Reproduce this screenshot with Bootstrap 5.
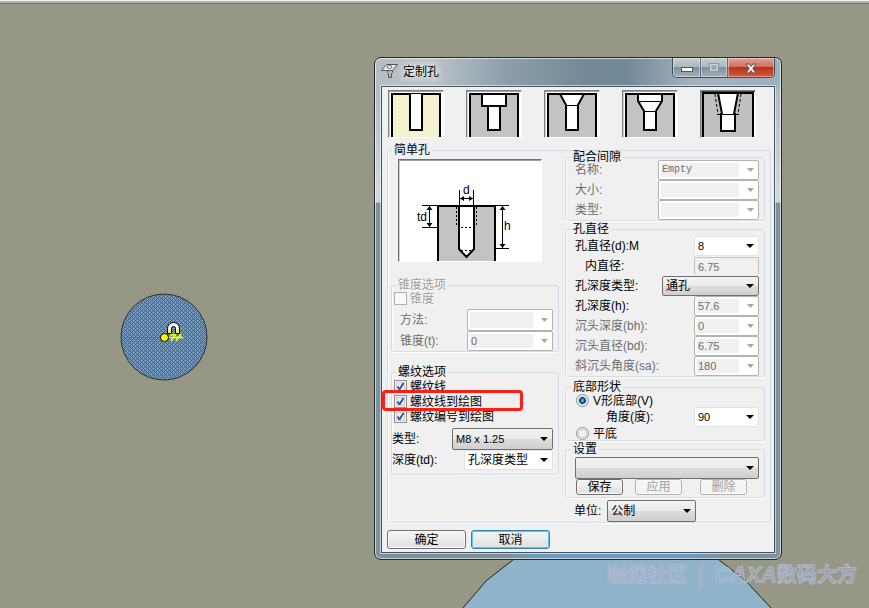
<!DOCTYPE html>
<html lang="zh-CN">
<head>
<meta charset="utf-8">
<meta name="viewport" content="width=device-width, initial-scale=1">
<title>定制孔</title>
<link href="https://cdn.jsdelivr.net/npm/bootstrap@5.3.0/dist/css/bootstrap.min.css" rel="stylesheet">
<style>
  body { background: #979785; font: 12px/14px "Liberation Sans", "Noto Sans CJK SC", sans-serif; color: #000; }
  .desk { min-height: 100vh; border-top: 1px solid #f0f0f0; box-shadow: inset 0 2px 0 #b4b4aa, inset 0 3px 0 #77776a; }
  .shape-small { left: 120px; top: 292px; }
  .shape-big { left: 462px; bottom: 0; }
  .wmark { left: 607px; top: 562px; font-size: 20px; line-height: 24px; font-weight: 700; color: rgba(160,178,205,.35); -webkit-text-stroke: 1px #b2b9d4; gap: 11px; }
  .wmark em { font-size: 22px; }

  .win { left: 374px; top: 56px; width: 408px; border: 1px solid #23282c; border-radius: 7px; padding: 0 6px 6px;
    background:
      linear-gradient(90deg, transparent 33%, #6f9bc0 40%, #6f9bc0 78%, transparent 86%) bottom/100% 7px no-repeat,
      linear-gradient(90deg, #b3bdc4 0, #bac4ca 14%, #8d9fab 32%, #748997 52%, #72899a 62%, #a3b2bd 78%, #9db0be 100%) top/100% 29px no-repeat,
      linear-gradient(180deg, #a4b3bd 0, #d3dbe0 144px, #7b929f 145px, #7b929f 100%);
    box-shadow: inset 0 0 0 1px rgba(255,255,255,.6); }
  .bar { height: 28px; }
  .bar h1 { font-size: 12px; line-height: 16px; padding-left: 5px; margin-top: 6px; text-shadow: 0 0 6px #fff, 0 0 8px #fff; }
  .caps { height: 20px; border: 1px solid #3f4d58; border-top: 0; border-radius: 0 0 5px 5px; overflow: hidden; }
  .caps button { border: 0; padding: 0; background: linear-gradient(#c5ced6 0, #aab7c1 48%, #7f909d 50%, #a2b2be 100%); box-shadow: inset 0 0 0 1px rgba(255,255,255,.4); }
  .caps button + button { border-left: 1px solid #5c6a75; }
  .cap-s { width: 27px; }
  .caps .cap-x { width: 47px; background: linear-gradient(#e2a397 0, #d0705f 45%, #bb3217 50%, #cf5c3c 100%); }

  .client { background: #f0f0f0; border: 1px solid #46545f; padding: 3px 3px 3px 5px; box-shadow: 0 0 0 1px rgba(255,255,255,.55); }
  .thumbs { gap: 22px; padding-left: 1px; }
  .thumb { width: 56px; height: 48px; padding: 0; border: 1px solid; border-color: #808080 #fff #fff #808080; background: #fff; }
  .thumb svg, .preview svg { display: block; }

  fieldset.grp { border: 1px solid #d3dde6; border-radius: 3px; box-shadow: inset 1px 0 0 #fff, 0 1px 0 #fff; }
  .grp > legend { float: none; width: auto; font-size: 12px; line-height: 14px; margin: 0 0 0 4px; padding: 0 2px; }
  .colR .grp > legend { margin-left: 5px; }
  .outer { margin-top: 5px; }
  .colL { padding: 2px 6px 0 3px; }
  .colR { width: 200px; margin: -7px 5px 0 0; flex: none; }
  .preview { width: 144px; height: 103px; margin-left: 7px; border: 1px solid; border-color: #707070 #fff #fff #707070; background: #fff; }
  .g-taper { margin-top: 16px; }
  .g-thread { margin-top: 13px; }
  .g-dia { margin-top: 1px; }
  .g-bot { margin-top: 3px; }
  .g-set { margin-top: 1px; }
  .rowsL { padding-right: 5px; }
  .rowsR { padding: 0 5px 0 9px; }
  .up { margin-top: -4px; }
  .r20 { height: 20px; }
  .r22 { height: 22px; }
  .r15 { height: 15px; }
  .r13 { height: 13px; }
  .pre8 { padding-left: 8px; }
  .in10 { padding-left: 10px; }
  .in31 { padding-left: 31px; }
  .dim, .dim label { color: #6d6d6d; }
  .off label, .off > legend.off { color: #9c9c9c; text-shadow: 1px 1px 0 #fff; }
  .off .dim label { color: #6d6d6d; text-shadow: none; }

  .form-select { width: auto; flex: none; height: 100%; min-height: 0; margin: 0; padding: 0 18px 0 3px; font-size: 12px; line-height: 16px; color: #000; border-radius: 2px; border: 1px solid #e2e3ea; background: #fff url("data:image/svg+xml,%3Csvg xmlns='http://www.w3.org/2000/svg' width='8' height='4'%3E%3Cpath d='M0 0h8L4 4z'/%3E%3C/svg%3E") right 4px center/8px 4px no-repeat; }
  .form-select.btnlike { border-color: #707070; background-image: url("data:image/svg+xml,%3Csvg xmlns='http://www.w3.org/2000/svg' width='8' height='4'%3E%3Cpath d='M0 0h8L4 4z'/%3E%3C/svg%3E"), linear-gradient(#f2f2f2, #ebebeb 49%, #dddddd 50%, #cfcfcf); background-size: 8px 4px, 100% 100%; background-position: right 4px center, 0 0; }
  .form-select:disabled { color: #6d6d6d; border-color: #b2b2b2; background-color: #fff; background-image: url("data:image/svg+xml,%3Csvg xmlns='http://www.w3.org/2000/svg' width='7' height='4'%3E%3Cpath d='M0 0h7L3.500 4z' fill='%23a8a8a8'/%3E%3C/svg%3E"), linear-gradient(#f0f0f0, #f0f0f0); background-size: 7px 4px, calc(100% - 21px) calc(100% - 4px); background-position: right 4px center, 2px 2px; }
  .num { font-size: 11px !important; }
  .mono { font-family: "Liberation Mono", monospace; font-size: 10px !important; }
  .w65 { width: 65px !important; } .w86 { width: 86px !important; } .w89 { width: 89px !important; }
  .w97 { width: 97px !important; } .w101 { width: 101px !important; }
  .ro { height: 18px; min-height: 0; padding: 0 0 0 3px; border: 1px solid #c4c4c4; border-bottom: 0; border-radius: 2px; color: #6d6d6d; background: #f0f0f0 !important; }

  .form-check-input { flex: none; margin: 0; width: 13px; height: 13px; border: 1px solid #8e8f8f; background-color: #f4f4f4; box-shadow: inset 0 0 0 1px #f4f4f4, inset 0 0 0 2px #c5cbd2; }
  .form-check-input[type=checkbox] { border-radius: 0; }
  .form-check-input:checked { background-color: #e8eef4; border-color: #8e8f8f; }
  .form-check-input:checked[type=checkbox] { background: #e8eef4 url("data:image/svg+xml,%3Csvg xmlns='http://www.w3.org/2000/svg' viewBox='0 0 11 11'%3E%3Cpath d='M2.500 5.500L4.500 8.500L8.500 2' fill='none' stroke='%232f4f9c' stroke-width='1.800'/%3E%3C/svg%3E") center/11px no-repeat; }
  .form-check-input:checked[type=radio] { background-image: radial-gradient(circle, #3fb5e8 0 1px, #125b8c 2px, #0c3350 3px, transparent 4px); }
  .form-check-input:disabled { opacity: 1; border-color: #b1b1b1; box-shadow: none; background: #f8f8f8; }
  .form-check-input:disabled ~ label { opacity: 1; }
  .tick { gap: 3px; padding-left: 2px; }
  .rad { gap: 4px; padding-left: 1px; }
  .flag { left: -10px; top: -4px; width: 141px; height: 21px; border: 3px solid #fb2013; border-radius: 4px; pointer-events: none; }

  .btn { padding: 0; font-size: 12px; line-height: 12px; color: #000; border: 1px solid #707070; border-radius: 3px; background: linear-gradient(#f4f4f4, #ededed 49%, #e8e8e8 50%, #e2e2e2); box-shadow: inset 0 0 0 1px #fbfbfb; }
  .btn-big { width: 79px; height: 19px; }
  .btn-def { border-color: #2f83b5; box-shadow: inset 0 0 0 1px #53ccf2; }
  .btn-sml { width: 47px; height: 16px; }
  .btn-sml:last-child { margin-left: 6px; }
  .btn:disabled { opacity: 1; color: #a0a0a0; border-color: #adb2b5; background: #f4f4f4; }
  .set-sel { margin-top: 1px; }
  .sets { gap: 12px; padding: 0 0 2px 1px; }
  .unit { gap: 6px; margin-top: 2px; }
  .foot { gap: 5px; padding-top: 7px; }
</style>
<script src="https://cdn.jsdelivr.net/npm/bootstrap@5.3.0/dist/js/bootstrap.bundle.min.js"></script>
</head>
<body>
<main class="desk position-relative overflow-hidden">
  <svg class="shape-small position-absolute" width="90" height="90" aria-hidden="true">
    <defs><pattern id="dots" width="4" height="4" patternUnits="userSpaceOnUse"><rect width="4" height="4" fill="#7598bd"/><path d="M0 0h1v1H0zM2 0h1v1H2zM1 1h1v1H1zM0 2h1v1H0zM2 2h1v1H2zM3 3h1v1H3z" fill="#4a5f7a" shape-rendering="crispEdges"/></pattern></defs>
    <circle cx="44" cy="44" r="43" fill="url(#dots)" stroke="#303030"/>
    <path d="M1 44.500H40" stroke="#66696e"/>
    <path d="M49 44.500h14M51 48l5-7M56 48l5-7M50 42h5" stroke="#ffff00" stroke-width="1.500" fill="none"/>
    <circle cx="44.500" cy="44.500" r="4" fill="#ffff00" stroke="#000"/>
    <path d="M47.500 40.500v-5a6 6 0 0 1 12 0v5h-4v-5a2 2 0 0 0-4 0v5z" fill="#fff" stroke="#000"/>
    <path d="M48 37h3v3h-3zM56 37h3v3h-3z" fill="#ffff00"/>
  </svg>
  <svg class="shape-big position-absolute" width="312" height="60" aria-hidden="true">
    <path d="M1 60L24 33L52 11L66 0H243L256 11L284 33L309 60" fill="#8fb3c8" stroke="#222"/>
  </svg>
  <div class="wmark position-absolute d-flex text-nowrap"><span>咖迷社区</span><span>|</span><span><em>CAXA</em>数码大方</span></div>

  <section class="win position-absolute" aria-label="定制孔">
    <header class="bar d-flex align-items-start">
      <svg class="mt-1" width="17" height="18" aria-hidden="true"><path d="M5.500 2.500h11l-5 6h-11z" fill="#eee" stroke="#555"/><ellipse cx="8.500" cy="5" rx="2.500" ry="1.500" fill="#fff" stroke="#666"/><path d="M6.500 8.500h5v2l-1 1v4h-3v-4l-1-1z" fill="#bbb" stroke="#555"/></svg>
      <h1 class="mb-0 fw-normal flex-grow-1">定制孔</h1>
      <div class="caps d-flex">
        <button type="button" class="cap-s" aria-label="最小化"><svg width="14" height="8"><rect x="1.500" y="3.500" width="11" height="4" fill="#fff" stroke="#4b5764"/></svg></button>
        <button type="button" class="cap-s" aria-label="最大化" disabled><svg width="12" height="10"><rect x="1.500" y=".5" width="9" height="8" fill="#c8d0d6" stroke="#8c98a2"/><rect x="4" y="3" width="4" height="3" fill="#a4b0ba" stroke="#8c98a2"/></svg></button>
        <button type="button" class="cap-x" aria-label="关闭"><svg width="12" height="11"><path d="M1 1h3l2 2.500L8 1h3L7.800 5.500L11 10H8L6 7.500L4 10H1l3.200-4.500z" fill="#fff" stroke="#5b4a50"/></svg></button>
      </div>
    </header>

    <div class="client">
      <div class="thumbs d-flex">
        <button type="button" class="thumb" aria-label="简单孔"><svg width="54" height="46"><defs><pattern id="cream" width="4" height="4" patternUnits="userSpaceOnUse"><rect width="4" height="4" fill="#f0f0cc"/><path d="M0 0h1v1H0zM2 2h1v1H2z" fill="#fffff0"/></pattern></defs><path d="M0 46V.5H54" fill="none" stroke="#a0a0a0"/><path d="M3 47V3H51V47" fill="url(#cream)" stroke="#000" stroke-width="2"/><path d="M21 3V39H33V3" fill="#fff" stroke="#000" stroke-width="2"/></svg></button>
        <button type="button" class="thumb" aria-label="沉头孔"><svg width="54" height="46"><path d="M0 46V.5H54" fill="none" stroke="#a0a0a0"/><path d="M3 47V3H51V47" fill="#c3c3c3" stroke="#000" stroke-width="2"/><path d="M15 3V15H21V39H33V15H39V3z" fill="#fff" stroke="#000" stroke-width="2"/><path d="M21 15H33" stroke="#000" stroke-width="2"/></svg></button>
        <button type="button" class="thumb" aria-label="锥形沉头孔"><svg width="54" height="46"><path d="M0 46V.5H54" fill="none" stroke="#a0a0a0"/><path d="M3 47V3H51V47" fill="#c3c3c3" stroke="#000" stroke-width="2"/><path d="M15 3L21 14V39H33V14L39 3z" fill="#fff" stroke="#000" stroke-width="2"/><path d="M21 14.500H33" stroke="#000"/></svg></button>
        <button type="button" class="thumb" aria-label="复合孔"><svg width="54" height="46"><path d="M0 46V.5H54" fill="none" stroke="#a0a0a0"/><path d="M3 47V3H51V47" fill="#c3c3c3" stroke="#000" stroke-width="2"/><path d="M15 3V10L21 20V39H33V20L39 10V3z" fill="#fff" stroke="#000" stroke-width="2"/><path d="M15 10.500H39M21 20.500H33" stroke="#000"/></svg></button>
        <button type="button" class="thumb" aria-label="锥孔"><svg width="54" height="46"><path d="M0 46V.5H54" fill="none" stroke="#444"/><path d="M2 47V2H52V47" fill="#c0c0c0" stroke="#000" stroke-width="2"/><path d="M17 2L21 23H20V40H34V23H33L37 2z" fill="#fff" stroke="#000" stroke-width="2"/><path d="M16 23.500H38" stroke="#000"/><path d="M14 3L17 23M40 3L37 23" stroke="#000" stroke-dasharray="3 2"/></svg></button>
      </div>

      <fieldset class="grp outer">
        <legend>简单孔</legend>
        <div class="d-flex">
          <div class="colL flex-grow-1">
            <div class="preview">
              <svg width="142" height="101" role="img" aria-label="孔尺寸示意图">
                <path d="M0 101V.5H142" fill="none" stroke="#a0a0a0"/>
                <path d="M39 102V46H96V102" fill="#c3c3c3" stroke="#000" stroke-width="2"/>
                <path d="M60 46V89L67.500 97L75 89V46" fill="#fff" stroke="#000" stroke-width="2"/>
                <path d="M61 46H74" stroke="#000" stroke-width="2"/>
                <path d="M23 45.500H60M75 45.500H110M60.500 30V46M74.500 30V46M61 38.500H74M30.500 46V67M23 67.500H39M103.500 46V88M96 88.500H110" stroke="#000" fill="none"/>
                <path d="M61 38.500l4-2.500v5zM74 38.500l-4-2.500v5zM30.500 46l-3 4h6zM30.500 67l-3-4h6zM103.500 46l-3 4h6zM103.500 88l-3-4h6z"/>
                <path d="M57.500 47V67M77.500 47V67M62 67.500H74M62 90.500H74" stroke="#000" stroke-dasharray="2 2" fill="none"/>
                <g font-size="12" font-family="Liberation Sans, sans-serif"><text x="64" y="34">d</text><text x="18" y="61">td</text><text x="105" y="70">h</text></g>
              </svg>
            </div>

            <fieldset class="grp g-taper off" disabled>
              <legend class="off">锥度选项</legend>
              <div class="rowsL">
                <div class="tick r13 d-flex align-items-center mb-1"><input class="form-check-input" type="checkbox" id="c0" disabled><label for="c0">锥度</label></div>
                <div class="r22 pre8 dim d-flex justify-content-between align-items-center"><label for="m1">方法:</label><select id="m1" class="form-select w86" disabled><option></option></select></div>
                <div class="r20 pre8 dim d-flex justify-content-between align-items-center"><label for="m2">锥度(t):</label><select id="m2" class="form-select num w86" disabled><option>0</option></select></div>
              </div>
            </fieldset>

            <fieldset class="grp g-thread">
              <legend>螺纹选项</legend>
              <div class="rowsL pb-1">
                <div class="tick r15 d-flex align-items-center"><input class="form-check-input" type="checkbox" id="c1" checked><label for="c1">螺纹线</label></div>
                <div class="tick r15 d-flex align-items-center position-relative"><input class="form-check-input" type="checkbox" id="c2" checked><label for="c2">螺纹线到绘图</label><span class="flag position-absolute"></span></div>
                <div class="tick r15 d-flex align-items-center mb-1"><input class="form-check-input" type="checkbox" id="c3" checked><label for="c3">螺纹编号到绘图</label></div>
                <div class="r22 d-flex justify-content-between align-items-center"><label for="t1">类型:</label><select id="t1" class="form-select btnlike num w101"><option>M8 x 1.25</option></select></div>
                <div class="r20 d-flex justify-content-between align-items-center"><label for="t2">深度(td):</label><select id="t2" class="form-select w89"><option>孔深度类型</option></select></div>
              </div>
            </fieldset>
          </div>

          <div class="colR">
            <fieldset class="grp">
              <legend>配合间隙</legend>
              <div class="rowsR up dim">
                <div class="r20 d-flex justify-content-between align-items-center"><label for="f1">名称:</label><select id="f1" class="form-select mono w101" disabled><option>Empty</option></select></div>
                <div class="r20 d-flex justify-content-between align-items-center"><label for="f2">大小:</label><select id="f2" class="form-select w101" disabled><option></option></select></div>
                <div class="r20 d-flex justify-content-between align-items-center"><label for="f3">类型:</label><select id="f3" class="form-select w101" disabled><option></option></select></div>
              </div>
            </fieldset>

            <fieldset class="grp g-dia">
              <legend>孔直径</legend>
              <div class="rowsR">
                <div class="r20 d-flex justify-content-between align-items-center"><label for="d1">孔直径(d):M</label><select id="d1" class="form-select num w65"><option>8</option></select></div>
                <div class="r20 d-flex justify-content-between align-items-center"><label for="d2" class="in10">内直径:</label><input id="d2" class="form-control ro num w65" value="6.75" readonly></div>
                <div class="r20 d-flex justify-content-between align-items-center"><label for="d3">孔深度类型:</label><select id="d3" class="form-select btnlike w97"><option>通孔</option></select></div>
                <div class="r20 d-flex justify-content-between align-items-center"><label for="d4">孔深度(h):</label><select id="d4" class="form-select num w65" disabled><option>57.6</option></select></div>
                <div class="r20 dim d-flex justify-content-between align-items-center"><label for="d5">沉头深度(bh):</label><select id="d5" class="form-select num w65" disabled><option>0</option></select></div>
                <div class="r20 dim d-flex justify-content-between align-items-center"><label for="d6">沉头直径(bd):</label><select id="d6" class="form-select num w65" disabled><option>6.75</option></select></div>
                <div class="r20 dim d-flex justify-content-between align-items-center"><label for="d7">斜沉头角度(sa):</label><select id="d7" class="form-select num w65" disabled><option>180</option></select></div>
              </div>
            </fieldset>

            <fieldset class="grp g-bot">
              <legend>底部形状</legend>
              <div class="rowsR">
                <div class="rad r13 d-flex align-items-center"><input class="form-check-input" type="radio" name="bot" id="b1" checked><label for="b1">V形底部(V)</label></div>
                <div class="r20 d-flex justify-content-between align-items-center"><label for="b2" class="in31">角度(度):</label><select id="b2" class="form-select num w65"><option>90</option></select></div>
                <div class="rad r13 d-flex align-items-center"><input class="form-check-input" type="radio" name="bot" id="b3"><label for="b3">平底</label></div>
              </div>
            </fieldset>

            <fieldset class="grp g-set">
              <legend>设置</legend>
              <div class="rowsR">
                <div class="r22 set-sel d-flex"><select class="form-select btnlike w-100" aria-label="设置"><option></option></select></div>
                <div class="sets d-flex"><button type="button" class="btn btn-sml">保存</button><button type="button" class="btn btn-sml" disabled>应用</button><button type="button" class="btn btn-sml" disabled>删除</button></div>
              </div>
            </fieldset>

            <div class="rowsR r22 d-flex align-items-center unit"><label for="u1">单位:</label><select id="u1" class="form-select btnlike w89"><option>公制</option></select></div>
          </div>
        </div>
      </fieldset>

      <div class="foot d-flex">
        <button type="button" class="btn btn-big">确定</button>
        <button type="button" class="btn btn-big btn-def">取消</button>
      </div>
    </div>
  </section>
</main>
</body>
</html>
